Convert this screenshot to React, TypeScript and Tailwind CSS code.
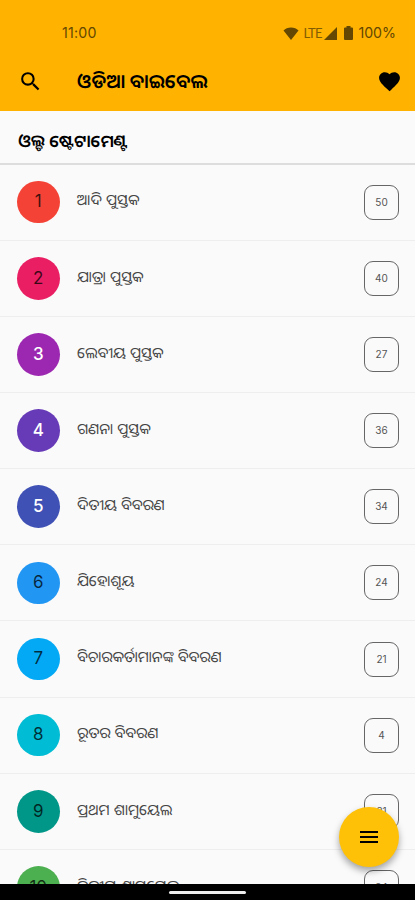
import { MdFavorite, MdMenu, MdSearch } from "react-icons/md";

type Book = {
  title: string;
  chapters: number;
  badge: string;
};

const books: Book[] = [
  { title: "ଆଦି ପୁସ୍ତକ", chapters: 50, badge: "bg-[#f44336] text-black/75" },
  { title: "ଯାତ୍ରା ପୁସ୍ତକ", chapters: 40, badge: "bg-[#e91e63] text-black/75" },
  { title: "ଲେବୀୟ ପୁସ୍ତକ", chapters: 27, badge: "bg-[#9c27b0] font-medium text-white" },
  { title: "ଗଣନା ପୁସ୍ତକ", chapters: 36, badge: "bg-[#673ab7] font-medium text-white" },
  { title: "ଦିତୀୟ ବିବରଣ", chapters: 34, badge: "bg-[#3f51b5] font-medium text-white" },
  { title: "ଯିହୋଶୂୟ", chapters: 24, badge: "bg-[#2196f3] text-black/75" },
  { title: "ବିଚାରକର୍ତାମାନଙ୍କ ବିବରଣ", chapters: 21, badge: "bg-[#03a9f4] text-black/75" },
  { title: "ରୂତର ବିବରଣ", chapters: 4, badge: "bg-[#00bcd4] text-black/75" },
  { title: "ପ୍ରଥମ ଶାମୁୟେଲ", chapters: 31, badge: "bg-[#009688] text-black/75" },
  { title: "ଦ୍ବିତୀୟ ଶାମୁୟେଲ", chapters: 24, badge: "bg-[#4caf50] text-black/75" },
];

const StatusBar = () => (
  <div className="flex h-[52px] items-end justify-between pr-[19px] pb-[9px] pl-[62px] text-[14.2px] leading-[20px] text-[#634703]">
    <span className="tracking-[0.2px]">11:00</span>
    <div className="flex items-center">
      <svg viewBox="0 0 16 13" className="h-[13px] w-[16px]" fill="currentColor">
        <path d="M8 13 0.5 3.6C2.4 1.5 5 .5 8 .5s5.600 1 7.500 3.100z" />
      </svg>
      <span className="ml-[4px] w-[19px] font-['Lato',sans-serif] text-[13px] tracking-[-0.8px] opacity-80">LTE</span>
      <svg viewBox="0 0 13 13" className="ml-[2px] size-[13px]" fill="currentColor">
        <path d="M13 0v13H0z" />
      </svg>
      <svg viewBox="0 0 9 14" className="ml-[7px] h-[14px] w-[9px]" fill="currentColor">
        <path d="M2.500 0h4v1.500H8a1 1 0 0 1 1 1V13a1 1 0 0 1-1 1H1a1 1 0 0 1-1-1V2.500a1 1 0 0 1 1-1h1.500z" />
      </svg>
      <span className="ml-[5px]">100%</span>
    </div>
  </div>
);

const BookRow = ({ book, index }: { book: Book; index: number }) => (
  <li className="flex h-[76.15px] shrink-0 items-center border-b border-[#eeeeee] pr-[16px] pl-[17px]">
    <div
      className={`flex size-[42.5px] shrink-0 items-center justify-center rounded-full text-[17px] ${book.badge}`}
    >
      {index + 1}
    </div>
    <span className="mb-[3px] ml-[17.5px] flex-grow text-[15px] whitespace-nowrap text-[#444]">
      {book.title}
    </span>
    <div className="flex size-[35px] shrink-0 items-center justify-center rounded-[9px] border border-[#666] text-[10px] text-[#555]">
      {book.chapters}
    </div>
  </li>
);

const App = () => {
  return (
    <div className="relative flex h-[900px] w-[415px] flex-col overflow-hidden bg-[#fafafa] font-['Inter','Noto_Sans_Oriya','Noto_Sans',sans-serif]">
      <header className="h-[111px] shrink-0 bg-[#ffb300]">
        <StatusBar />
        <div className="flex h-[59px] items-center pr-[13px] pl-[18px]">
          <MdSearch className="size-[25px]" />
          <h1 className="ml-[34px] flex-grow text-[19.4px] leading-none font-semibold">ଓଡିଆ ବାଇବେଲ</h1>
          <MdFavorite className="size-[25px]" />
        </div>
      </header>

      <h2 className="flex h-[53.6px] shrink-0 items-center border-b-2 border-[#dddddd] pt-[8px] pl-[18px] text-[17.2px] font-semibold">
        ଓଲ୍ଡ ଷ୍ଟେଟାମେଣ୍ଟ
      </h2>

      <ul className="flex min-h-0 flex-1 flex-col overflow-hidden">
        {books.map((book, index) => (
          <BookRow key={book.title} book={book} index={index} />
        ))}
      </ul>

      <nav className="flex h-[16px] shrink-0 items-center justify-center bg-black">
        <div className="h-[3px] w-[77px] rounded-full bg-[#eeeeee]" />
      </nav>

      <button className="absolute top-[807px] left-[339px] flex size-[60px] items-center justify-center rounded-full bg-[#ffc107] shadow-[0_4px_7px_rgba(0,0,0,0.35)]">
        <MdMenu className="size-[24px]" />
      </button>
    </div>
  );
};

export default App;
